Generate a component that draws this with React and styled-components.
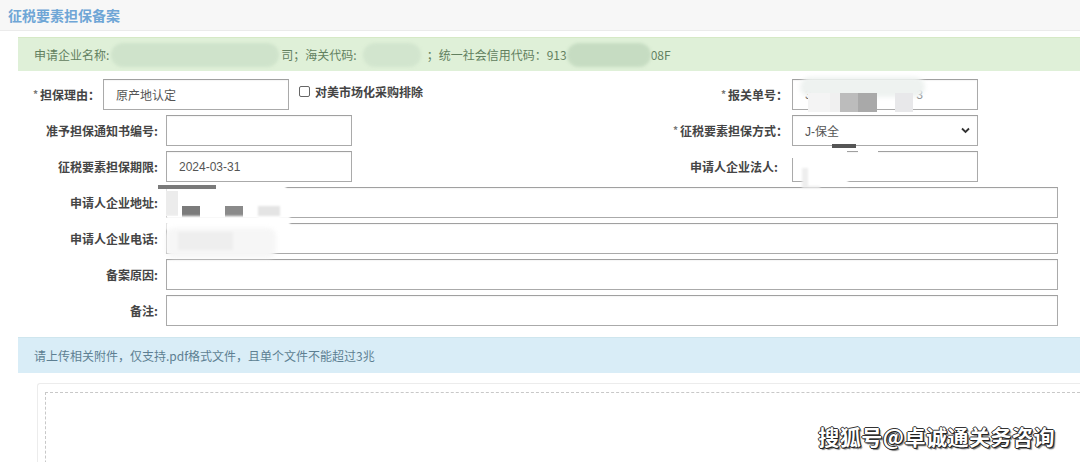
import React from "react";
import styled, { createGlobalStyle } from "styled-components";

const Global = createGlobalStyle`
  html, body { margin: 0; padding: 0; background: #ffffff; }
  body { font-family: "Microsoft YaHei", "Noto Sans CJK SC", "Noto Sans", sans-serif; color: #333; }
  * { box-sizing: border-box; }
`;

const Page = styled.div`
  position: relative;
  width: 1080px;
  height: 462px;
  overflow: hidden;
  background: #fff;
`;

const Header = styled.div`
  height: 31px;
  background: #f7f7f7;
  border-bottom: 1px solid #ebebeb;
  display: flex;
  align-items: center;
  padding-left: 8px;
`;

const Title = styled.h1`
  margin: 0;
  font-size: 14px;
  font-weight: bold;
  color: #6fa6d6;
`;

const Body = styled.div`
  padding-left: 18px;
  padding-top: 6px;
`;

const Alert = styled.div`
  height: ${(p) => p.$h}px;
  margin-top: ${(p) => p.$mt || 0}px;
  background: ${(p) => p.$bg};
  color: ${(p) => p.$color};
  display: flex;
  align-items: center;
  padding-left: 16px;
  font-size: 12px;
  white-space: nowrap;
  border-top: 1px solid ${(p) => p.$edge};
`;

const Mask = styled.span`
  display: inline-block;
  width: ${(p) => p.$w}px;
  height: 24px;
  margin: 0 ${(p) => p.$m || 0}px;
  border-radius: 12px;
  background: ${(p) => p.$bg};
  filter: blur(1.5px);
  vertical-align: middle;
`;

const Form = styled.div`
  display: flex;
  flex-direction: column;
  gap: 5px;
  margin-top: 8px;
  padding-right: 22px;
`;

const Row = styled.div`
  display: flex;
  align-items: center;
  height: 31px;
`;

const Half = styled.div`
  display: flex;
  align-items: center;
  width: ${(p) => p.$w}px;
  padding-left: ${(p) => p.$pl || 0}px;
  height: 100%;
`;

const Label = styled.label`
  width: ${(p) => (p.$w ? `${p.$w}px` : "auto")};
  flex-shrink: 0;
  text-align: right;
  font-size: 12px;
  font-weight: bold;
  color: #454545;
  padding-right: ${(p) => p.$pr ?? 8}px;
  white-space: nowrap;
`;

const Star = styled.span`
  color: #777;
  font-size: 10px;
  margin-right: 2px;
  position: relative;
  top: -2px;
`;

const Box = styled.div`
  position: relative;
  width: ${(p) => (p.$w ? `${p.$w}px` : "auto")};
  flex: ${(p) => (p.$w ? "0 0 auto" : "1 1 auto")};
  height: 100%;
  border: 1px solid #aaaaaa;
  border-top-color: #a0a0a0;
  background: #fff;
  display: flex;
  align-items: center;
  padding-left: 12px;
  font-size: 12px;
  color: #555;
  font-family: "Liberation Sans", "Noto Sans CJK SC", sans-serif;
  box-shadow: inset 0 1px 1px rgba(0, 0, 0, 0.04);
`;

const Tail = styled.span`
  margin-left: auto;
  margin-right: 54px;
  color: #888;
`;

const Chevron = styled.svg`
  position: absolute;
  right: 7px;
  top: 50%;
  margin-top: -4px;
`;

const Check = styled.span`
  display: inline-block;
  width: 11px;
  height: 11px;
  border: 1px solid #666;
  border-radius: 2px;
  background: #fff;
  margin-left: 10px;
  margin-right: 5px;
  position: relative;
  top: -3px;
`;

const CheckText = styled.span`
  font-size: 12px;
  font-weight: bold;
  color: #444;
  position: relative;
  top: -3px;
`;

const Blot = styled.div`
  position: absolute;
  left: ${(p) => p.$x}px;
  top: ${(p) => p.$y}px;
  width: ${(p) => p.$w}px;
  height: ${(p) => p.$h}px;
  background: ${(p) => p.$c};
  border-radius: ${(p) => p.$r || 0}px;
  filter: blur(${(p) => p.$b || 0}px);
`;

const Upload = styled.div`
  margin-top: 10px;
  margin-left: 19px;
  border-top: 1px solid #ececec;
  border-left: 1px solid #ececec;
  border-radius: 3px 0 0 0;
  padding: 8px 0 0 7px;
  height: 100px;
`;

const Drop = styled.div`
  height: 100%;
  border-top: 1px dashed #c8c8c8;
  border-left: 1px dashed #c8c8c8;
`;

const Watermark = styled.div`
  position: absolute;
  right: 25px;
  bottom: 11px;
  font-size: 21px;
  font-weight: bold;
  color: #ffffff;
  letter-spacing: 0.5px;
  text-shadow: 1px 1px 0 #222, -1px 0 0 #222, 0 -1px 0 #333, 1px 0 0 #222, 0 1px 0 #222, 2px 2px 1px rgba(0,0,0,0.5);
  font-family: "Noto Sans CJK SC", sans-serif;
`;

const ChevronIcon = () => (
  <Chevron width="9" height="7" viewBox="0 0 9 7">
    <path d="M1 1.5 L4.5 5 L8 1.5" fill="none" stroke="#333" strokeWidth="1.8" />
  </Chevron>
);

const wide = ["申请人企业地址:", "申请人企业电话:", "备案原因:", "备注:"];

export default function App() {
  return (
    <Page>
      <Global />
      <Header>
        <Title>征税要素担保备案</Title>
      </Header>
      <Body>
        <Alert $h={34} $bg="#dff0d8" $color="#62805f" $edge="#d6e9c6">
          申请企业名称:
          <Mask $w={168} $bg="#cfe3cb" $m={2} />
          司；海关代码:
          <Mask $w={58} $bg="#d2e5ce" $m={6} />
          ；统一社会信用代码：913
          <Mask $w={84} $bg="#c6dcc2" />
          08F
        </Alert>
        <Form>
          <Row>
            <Half $w={622} $pl={15}>
              <Label $pr={3}>
                <Star>*</Star>担保理由：
              </Label>
              <Box $w={186}>原产地认定</Box>
              <Check />
              <CheckText>对美市场化采购排除</CheckText>
            </Half>
            <Half $w={338}>
              <Label $w={152} $pr={4}>
                <Star>*</Star>报关单号：
              </Label>
              <Box $w={186}>
                3<Tail>3</Tail>
              </Box>
            </Half>
          </Row>
          <Row>
            <Half $w={622}>
              <Label $w={148}>准予担保通知书编号:</Label>
              <Box $w={186} />
            </Half>
            <Half $w={338}>
              <Label $w={152} $pr={4}>
                <Star>*</Star>征税要素担保方式：
              </Label>
              <Box $w={186}>
                J-保全
                <ChevronIcon />
              </Box>
            </Half>
          </Row>
          <Row>
            <Half $w={622}>
              <Label $w={148}>征税要素担保期限:</Label>
              <Box $w={186}>2024-03-31</Box>
            </Half>
            <Half $w={338}>
              <Label $w={152} $pr={14}>申请人企业法人:</Label>
              <Box $w={186} />
            </Half>
          </Row>
          {wide.map((l) => (
            <Row key={l}>
              <Label $w={148}>{l}</Label>
              <Box />
            </Row>
          ))}
        </Form>
        <Alert $h={36} $mt={11} $bg="#d9edf7" $color="#5d7f92" $edge="#cfe6ee">
          请上传相关附件，仅支持.pdf格式文件，且单个文件不能超过3兆
        </Alert>
        <Upload>
          <Drop />
        </Upload>
      </Body>

      {/* privacy mosaic over 报关单号 */}
      <Blot $x={800} $y={77} $w={125} $h={20} $c="#eef2f0" $r={10} $b={2} />
      <Blot $x={808} $y={93} $w={22} $h={19} $c="#f4f4f4" />
      <Blot $x={830} $y={93} $w={22} $h={19} $c="#f0f0f0" />
      <Blot $x={840} $y={93} $w={37} $h={19} $c="#bcbcbc" />
      <Blot $x={858} $y={93} $w={19} $h={19} $c="#a9a9a9" />
      <Blot $x={895} $y={93} $w={18} $h={19} $c="#e8e8ea" />
      {/* mosaic near select / 法人 */}
      <Blot $x={832} $y={144} $w={24} $h={4} $c="#555" $b={0.5} />
      <Blot $x={858} $y={146} $w={20} $h={10} $c="#ffffff" />
      <Blot $x={792} $y={150} $w={55} $h={8} $c="#ffffff" />
      <Blot $x={802} $y={168} $w={18} $h={20} $c="#eeeeee" $b={1} />
      <Blot $x={808} $y={154} $w={40} $h={32} $c="#ffffff" $b={1} />
      {/* mosaic over 地址 / 电话 */}
      <Blot $x={166} $y={185} $w={120} $h={12} $c="#ffffff" $b={1} />
      <Blot $x={158} $y={185} $w={58} $h={4} $c="#7a7a7a" $b={0.5} />
      <Blot $x={166} $y={191} $w={12} $h={25} $c="#ececec" />
      <Blot $x={182} $y={206} $w={18} $h={18} $c="#7b7b7b" />
      <Blot $x={225} $y={206} $w={18} $h={18} $c="#8a8a8a" />
      <Blot $x={258} $y={206} $w={22} $h={18} $c="#e4e4e4" $b={1} />
      <Blot $x={166} $y={216} $w={124} $h={14} $c="#ffffff" $b={1} />
      <Blot $x={166} $y={228} $w={110} $h={30} $c="#f6f6f6" $r={8} $b={2} />
      <Blot $x={178} $y={232} $w={55} $h={18} $c="#eeeeee" $b={1} />

      <Watermark>搜狐号@卓诚通关务咨询</Watermark>
    </Page>
  );
}
